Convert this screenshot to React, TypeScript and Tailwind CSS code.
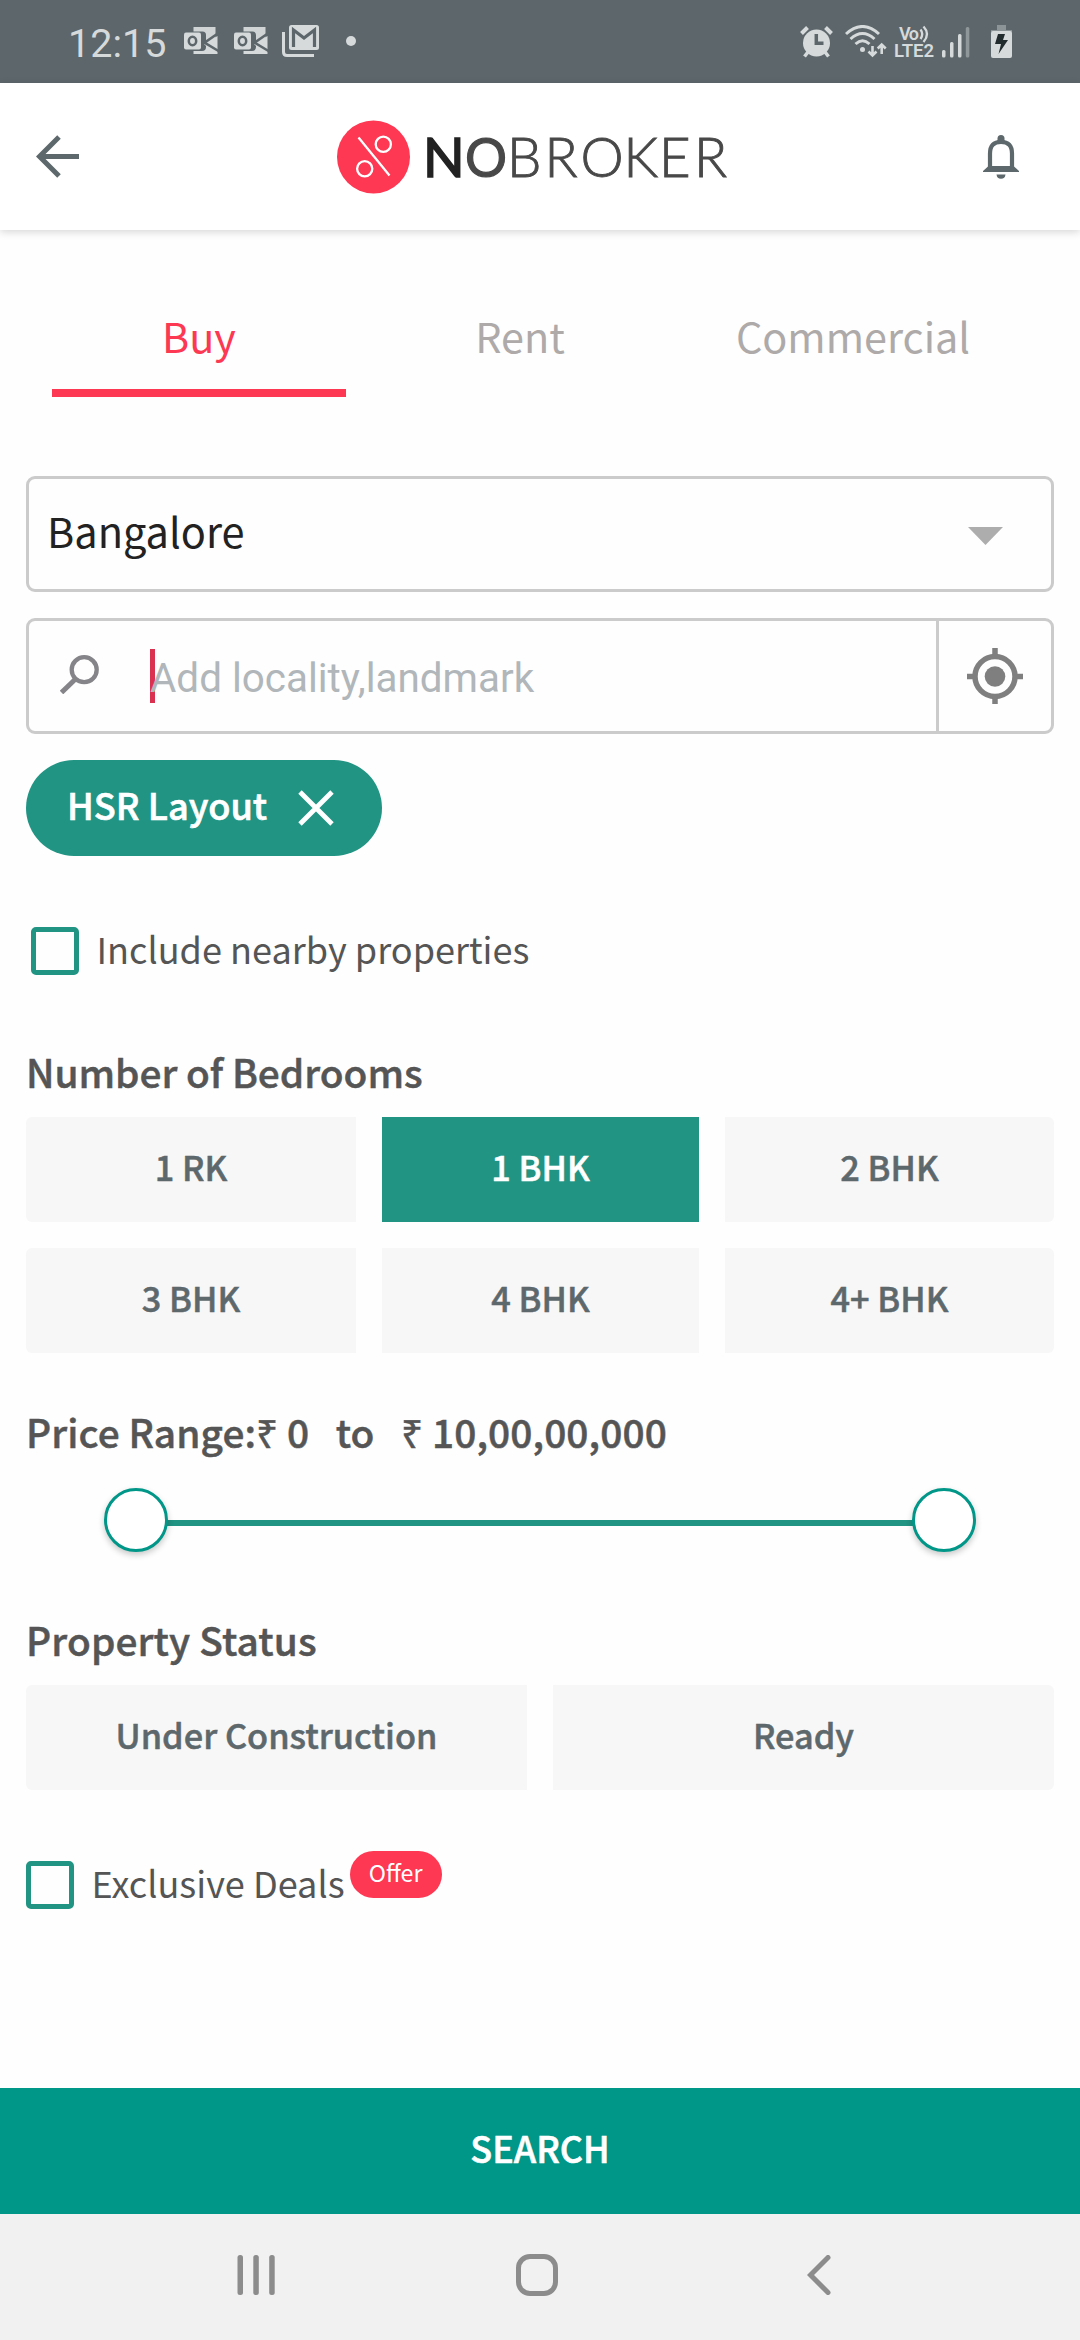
const bedrooms = ['1 RK', '1 BHK', '2 BHK', '3 BHK', '4 BHK', '4+ BHK'];

function OutlookIcon() {
  return (
    <svg width="36" height="28" viewBox="0 0 36 28" className="shrink-0">
      <path d="M9.5 0H31.500V13L22 17.300V8Q22 4.500 18.500 4.500H9.500Z" fill="#d6dadb" opacity="0.95" />
      <path d="M20 17 L33.500 9V27H9.500V24H18Q22 24 22 20V19Z" fill="#d6dadb" />
      <path d="M34.500 6L20.500 15.700L34.500 24" fill="none" stroke="#5d676b" strokeWidth="2.500" />
      <rect x="0" y="5.500" width="17" height="17" rx="2" fill="#d6dadb" />
      <ellipse cx="8.500" cy="14" rx="3.700" ry="4.300" fill="none" stroke="#5d676b" strokeWidth="2.500" />
    </svg>
  );
}

function GmailStackIcon() {
  return (
    <svg width="37" height="32" viewBox="0 0 37 32" className="shrink-0">
      <path d="M1.500 7V27Q1.500 30.500 5 30.500H32" fill="none" stroke="#d6dadb" strokeWidth="3" />
      <rect x="7" y="0" width="30" height="25" rx="2.500" fill="#d6dadb" />
      <path d="M11.500 22V5L22 13L32.500 5V22" fill="none" stroke="#5d676b" strokeWidth="3.200" />
    </svg>
  );
}

function AlarmIcon() {
  return (
    <svg width="33" height="32" viewBox="0 0 33 32" className="shrink-0">
      <circle cx="16.500" cy="17" r="13.500" fill="#d6dadb" />
      <path d="M1.500 7.500L7.500 1.500M31.500 7.500L25.500 1.500" stroke="#d6dadb" strokeWidth="4" />
      <path d="M8 26L4.500 30.500M25 26L28.500 30.500" stroke="#d6dadb" strokeWidth="3.500" />
      <path d="M16.300 8V17.300H23.500" fill="none" stroke="#5d676b" strokeWidth="3.500" />
    </svg>
  );
}

function WifiIcon() {
  return (
    <svg width="42" height="33" viewBox="0 0 42 33" className="shrink-0" fill="none" stroke="#d6dadb" strokeWidth="3">
      <path d="M1 9Q17.500 -6 34 9" />
      <path d="M5.500 14Q17.500 3 29.500 14" />
      <path d="M10.500 19Q17.500 12.500 24.500 19" />
      <circle cx="17.500" cy="24.500" r="2.500" fill="#d6dadb" stroke="none" />
      <path d="M27.500 21V30M23.500 26.500L27.500 30.500L31.500 26.500M36.700 29V19.500M32.700 23.500L36.700 19.500L40.700 23.500" strokeWidth="2.600" />
    </svg>
  );
}

function StatusBar() {
  return (
    <div className="flex h-[83px] shrink-0 items-start bg-[#5d676b] pl-[68px] font-['Roboto',sans-serif] text-[#d6dadb]">
      <span className="mt-[14px] w-[116px] text-[39.500px] leading-[60px]">12:15</span>
      <div className="mt-[27px] flex gap-[14px]">
        <OutlookIcon />
        <OutlookIcon />
      </div>
      <div className="mt-[25px] ml-[12px]">
        <GmailStackIcon />
      </div>
      <div className="mt-[36px] ml-[27px] h-[10px] w-[10px] rounded-full bg-[#d6dadb]" />
      <div className="mt-[26px] ml-auto">
        <AlarmIcon />
      </div>
      <div className="mt-[25px] ml-[12px]">
        <WifiIcon />
      </div>
      <svg width="44" height="40" viewBox="-1 -1 44 40" className="mt-[23px] ml-[6px] shrink-0" fill="#d6dadb">
        <text x="5" y="16" fontSize="18" fontWeight="600" fontFamily="Roboto" textLength="20">Vo</text>
        <path d="M26.500 5.500Q30 10 26.500 15M29.500 2.500Q36.500 10 29.500 18" fill="none" stroke="#d6dadb" strokeWidth="2.300" />
        <text x="0" y="33" fontSize="18.500" fontWeight="600" fontFamily="Roboto" textLength="40">LTE2</text>
      </svg>
      <svg width="28" height="31" viewBox="0 0 28 31" className="mt-[27px] ml-[5px] shrink-0" fill="#d6dadb">
        <rect x="0" y="23" width="3.500" height="7.500" rx="1.500" />
        <rect x="8" y="15" width="3.500" height="15.500" rx="1.500" />
        <rect x="16" y="7" width="3.500" height="23.500" rx="1.500" />
        <rect x="23.800" y="0" width="3.500" height="30.500" rx="1.500" fill="#90979a" />
      </svg>
      <svg width="21" height="33" viewBox="0 0 21 33" className="mt-[25px] mr-[68px] ml-[21px] shrink-0">
        <path d="M6 0H15V5H21V7H0V5H6Z" fill="#8d9497" />
        <rect x="0" y="6" width="21" height="27" rx="2" fill="#d6dadb" />
        <path d="M7 9H14L12 15H17L7.500 29L10 19H4Z" fill="#222b2e" />
      </svg>
    </div>
  );
}

function Logo() {
  return (
    <svg width="394" height="74" viewBox="336 119 394 74" className="ml-[257px] shrink-0">
      <circle cx="373.500" cy="156" r="36.500" fill="#fe3753" />
      <g fill="none" stroke="#fff" strokeWidth="2.300">
        <path d="M358.500 136.500L389.500 174.500" />
        <circle cx="383.300" cy="143.300" r="7.600" />
        <circle cx="364.700" cy="167.800" r="7.600" />
      </g>
      <g fontFamily="Lato" fontSize="54.500">
        <text x="423" y="176" fontWeight="400" fill="#222" stroke="#222" strokeWidth="1.600">N</text>
        <text x="465" y="176" fontWeight="400" fill="#484848" stroke="#484848" strokeWidth="1.200" textLength="42" lengthAdjust="spacingAndGlyphs">O</text>
        <text x="507 544.500 580.500 623.500 659 694" y="176" fontWeight="300" fill="#484848" stroke="#484848" strokeWidth="0.900">BROKER</text>
      </g>
    </svg>
  );
}

function Header() {
  return (
    <header className="z-10 flex h-[147px] shrink-0 items-center bg-white pl-[36px] shadow-[0_2px_8px_rgba(0,0,0,0.16)]">
      <svg width="43" height="43" viewBox="0 0 43 43" className="shrink-0" fill="none" stroke="#5d686c" strokeWidth="5">
        <path d="M23 2L3.500 21.500L23 41M4 21.500H43" />
      </svg>
      <Logo />
      <svg width="36" height="44" viewBox="0 0 36 44" className="mt-px ml-[253px] shrink-0">
        <path d="M14.500 6V3.500Q14.500 0 18 0Q21.500 0 21.500 3.500V6Z" fill="#5d686c" />
        <path d="M7 33V18.500Q7 6.800 18 6.800Q29 6.800 29 18.500V33Z" fill="none" stroke="#5d686c" strokeWidth="4.200" />
        <path d="M0 37V36L5 31.500V32.500H31V31.500L36 36V37Z" fill="#5d686c" />
        <path d="M13.500 39.500H22.500Q22 43.800 18 43.800Q14 43.800 13.500 39.500Z" fill="#5d686c" />
      </svg>
    </header>
  );
}

function Tabs() {
  const base = 'h-[167px] border-b-8 pt-[75px] text-center text-[41.400px] leading-[60px]';
  return (
    <nav className="mx-[52px] flex shrink-0">
      <div className={`${base} w-[294px] border-[#fc3853] text-[#fc3853]`}>Buy</div>
      <div className={`${base} w-[348px] border-transparent text-[#aeaaa9]`}>Rent</div>
      <div className={`${base} w-[318px] border-transparent text-[#aeaaa9]`}>Commercial</div>
    </nav>
  );
}

function SearchField() {
  return (
    <div className="mt-[26px] flex h-[116px] items-start rounded-[9px] border-3 border-[#cbcbcb]">
      <svg width="39" height="39" viewBox="0 0 39 39" className="mt-[34px] ml-[31px] shrink-0" fill="none" stroke="#858589">
        <circle cx="24.200" cy="14.700" r="12.500" strokeWidth="4.300" />
        <path d="M15 24.500L1.500 37.500" strokeWidth="5" />
      </svg>
      <div className="relative mt-[28px] ml-[51px] grow font-['Roboto',sans-serif] text-[40.400px] leading-[60px] text-[#b0b6b9]">
        <span className="absolute top-0 left-0 h-[54px] w-[5px] bg-[#db3151]" />
        <span className="relative">Add locality,landmark</span>
      </div>
      <div className="flex h-full w-[115px] items-center justify-center border-l-3 border-[#cbcbcb]">
        <svg width="56" height="56" viewBox="0 0 56 56" fill="none" stroke="#7f7f7f" strokeWidth="5.500">
          <circle cx="28" cy="28.500" r="20" />
          <path d="M28 0V7M28 49V56M0 28.500H7M49 28.500H56" />
          <circle cx="28" cy="28.500" r="10.300" fill="#7f7f7f" stroke="none" />
        </svg>
      </div>
    </div>
  );
}

function Checkbox() {
  return <span className="h-[48px] w-[48px] shrink-0 rounded-[5px] border-[5.500px] border-[#219484]" />;
}

function Heading({ children, tracking = '' }: { children: string; tracking?: string }) {
  return (
    <h2 className={`text-[38.800px] leading-[60px] font-medium whitespace-pre text-[#555] [-webkit-text-stroke:0.5px_#555] ${tracking}`}>
      {children}
    </h2>
  );
}

function Option({ label, selected, edge }: { label: string; selected?: boolean; edge?: 'left' | 'right' }) {
  const tone = selected
    ? 'bg-[#219484] text-white [-webkit-text-stroke:0.5px_#fff]'
    : 'bg-[#f7f7f7] text-[#5d686c] [-webkit-text-stroke:0.5px_#5d686c]';
  const corner = edge === 'left' ? 'rounded-l-[6px]' : edge === 'right' ? 'rounded-r-[6px]' : '';
  return (
    <button className={`flex h-[105px] items-center justify-center pb-[7px] text-[34.300px] leading-[50px] font-medium ${tone} ${corner}`}>
      {label}
    </button>
  );
}

function PriceSlider() {
  const thumb = 'h-[64px] w-[64px] shrink-0 rounded-full border-3 border-[#009688] bg-white shadow-[0_3px_6px_rgba(0,0,0,0.22)]';
  return (
    <div className="mt-[27px] mr-[78px] ml-[78px] flex h-[64px] items-center">
      <div className={`${thumb} z-10`} />
      <div className="-mx-[3px] mt-[6px] h-[6px] grow bg-[#219484]" />
      <div className={`${thumb} z-10`} />
    </div>
  );
}

function NavBar() {
  return (
    <div className="flex h-[126px] shrink-0 items-start bg-[#f1f1f1]">
      <svg width="38" height="40" viewBox="0 0 38 40" className="mt-[41px] ml-[237px] shrink-0" fill="#8c8c8c">
        <rect x="0.500" y="0" width="5.500" height="40" rx="2.500" />
        <rect x="16.300" y="0" width="5.500" height="40" rx="2.500" />
        <rect x="32.200" y="0" width="5.500" height="40" rx="2.500" />
      </svg>
      <div className="mt-[40px] ml-[241px] h-[42px] w-[42px] rounded-[14px] border-5 border-[#8c8c8c]" />
      <svg width="24" height="40" viewBox="0 0 24 40" className="mt-[41px] ml-[248.500px] shrink-0" fill="none" stroke="#8c8c8c" strokeWidth="5" strokeLinecap="round">
        <path d="M21 2.500L3.500 20L21 37.500" />
      </svg>
    </div>
  );
}

export default function App() {
  return (
    <div className="flex h-[2340px] w-[1080px] flex-col overflow-hidden bg-[#fefefe] font-['Noto_Sans_CJK_SC',sans-serif]">
      <StatusBar />
      <Header />
      <Tabs />
      <main className="mx-[26px] flex flex-col">
        <div className="mt-[79px] flex h-[116px] items-start justify-between rounded-[9px] border-3 border-[#cbcbcb] pr-[48px] pl-[18px]">
          <span className="mt-[20.500px] text-[41.500px] leading-[60px] text-[#222]">Bangalore</span>
          <svg width="35" height="18" viewBox="0 0 35 18" className="mt-[48px]">
            <path d="M0 0H35L17.500 18Z" fill="#adadad" />
          </svg>
        </div>

        <SearchField />

        <div className="mt-[26px] flex h-[96px] w-[356px] items-center rounded-full bg-[#219484] pl-[41px] text-white">
          <span className="-mt-[8px] text-[36.200px] leading-[60px] font-medium whitespace-nowrap [-webkit-text-stroke:0.6px_#fff]">HSR Layout</span>
          <svg width="36" height="36" viewBox="0 0 36 36" className="ml-[31px] shrink-0" fill="none" stroke="#fff" strokeWidth="4.800">
            <path d="M2 2L34 34M34 2L2 34" />
          </svg>
        </div>

        <label className="mt-[71px] ml-[5px] flex h-[48px] items-center gap-[17.500px]">
          <Checkbox />
          <span className="-mt-[6px] text-[36.100px] leading-[60px] text-[#555]">Include nearby properties</span>
        </label>

        <div className="mt-[66px]">
          <Heading>Number of Bedrooms</Heading>
        </div>
        <div className="mt-[16px] grid grid-cols-[330px_317px_329px] gap-[26px]">
          {bedrooms.map((label, i) => (
            <Option key={label} label={label} selected={i === 1} edge={i % 3 === 0 ? 'left' : i % 3 === 2 ? 'right' : undefined} />
          ))}
        </div>

        <div className="mt-[48px]">
          <Heading tracking="tracking-[0.1px]">{'Price Range:₹ 0   to   ₹ 10,00,00,000'}</Heading>
        </div>
        <PriceSlider />

        <div className="mt-[57px]">
          <Heading tracking="tracking-[0.15px]">Property Status</Heading>
        </div>
        <div className="mt-[16px] grid grid-cols-2 gap-[26px]">
          <Option label="Under Construction" edge="left" />
          <Option label="Ready" edge="right" />
        </div>

        <label className="mt-[71px] flex h-[48px] items-center">
          <Checkbox />
          <span className="-mt-[6px] ml-[17.500px] text-[36.100px] leading-[60px] text-[#555]">Exclusive Deals</span>
          <span className="-mt-[21px] ml-[5px] flex h-[47px] w-[92px] items-center justify-center rounded-full bg-[#fe3753] pb-[6px] text-[23.200px] leading-[34px] text-white">
            Offer
          </span>
        </label>
      </main>

      <button className="mt-auto flex h-[126px] shrink-0 items-center justify-center bg-[#009688] pb-[8px] text-[36px] leading-[60px] font-medium text-white [-webkit-text-stroke:0.6px_#fff]">
        SEARCH
      </button>
      <NavBar />
    </div>
  );
}
